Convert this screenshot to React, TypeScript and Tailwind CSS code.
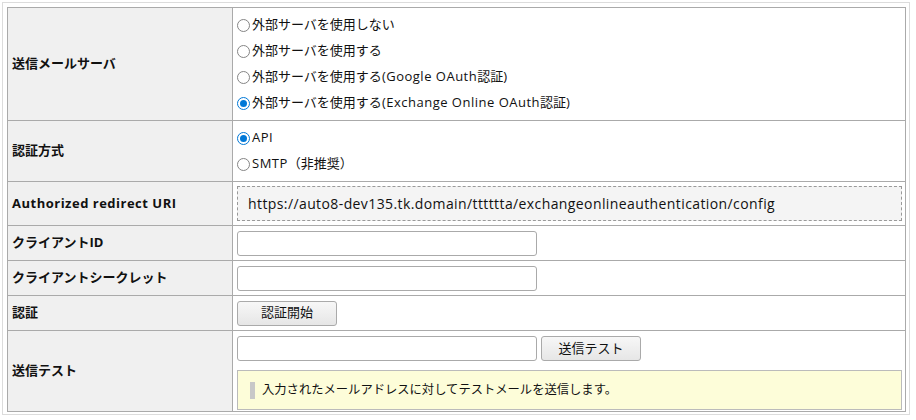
import type { ReactNode } from 'react'

const font = { fontFamily: '"Open Sans", "Noto Sans CJK JP", sans-serif' }

function Radio({ checked, children }: { checked?: boolean; children: ReactNode }) {
  return (
    <label className="flex h-[26px] items-center text-[13px] text-[#111]">
      {checked ? (
        <span className="flex h-[13px] w-[13px] items-center justify-center rounded-full border border-[#0078d7] bg-white">
          <span className="h-[7px] w-[7px] rounded-full bg-[#0078d7]" />
        </span>
      ) : (
        <span className="h-[13px] w-[13px] rounded-full border border-[#858585] bg-white" />
      )}
      <span className="ml-[2px]">{children}</span>
    </label>
  )
}

function Row({ label, h, last, top, children }: { label: ReactNode; h: string; last?: boolean; top?: boolean; children: ReactNode }) {
  return (
    <div className={`flex ${last ? '' : 'border-b border-[#aaa]'}`}>
      <div className={`flex w-[225px] shrink-0 items-center border-r border-[#aaa] bg-[#f0f0f0] pl-[4px] text-[13px] font-bold text-[#111] ${h}`}>
        {label}
      </div>
      <div className={`flex flex-1 flex-col pl-[4px] pr-[3px] ${top ? 'justify-start pt-[5px]' : 'justify-center'}`}>{children}</div>
    </div>
  )
}

function TextInput() {
  return <div className="h-[25px] w-[300px] rounded-[3px] border border-[#aaa] bg-white" />
}

function Button({ children }: { children: ReactNode }) {
  return (
    <button className="flex h-[25px] w-[100px] items-center justify-center rounded-[3px] border border-[#aaa] bg-gradient-to-b from-[#f7f7f7] to-[#e6e6e6] text-[13px] text-[#111]">
      {children}
    </button>
  )
}

const Latin = ({ children }: { children: ReactNode }) => <span className="tracking-[0.5px]">{children}</span>

export default function App() {
  return (
    <div className="bg-white p-[2px]" style={font}>
      <div className="w-[908px] border border-[#dcdcdc] pb-[2px] pl-[4px] pr-[3px] pt-[4px]">
        <div className="border border-[#aaa]">
          <Row label="送信メールサーバ" h="h-[112px]">
            <div className="flex flex-col">
              <Radio>外部サーバを使用しない</Radio>
              <Radio>外部サーバを使用する</Radio>
              <Radio>
                外部サーバを使用する<Latin>(Google OAuth</Latin>認証)
              </Radio>
              <Radio checked>
                外部サーバを使用する<Latin>(Exchange Online OAuth</Latin>認証)
              </Radio>
            </div>
          </Row>
          <Row label="認証方式" h="h-[60px]">
            <div className="flex flex-col">
              <Radio checked>
                <Latin>API</Latin>
              </Radio>
              <Radio>
                <Latin>SMTP</Latin>（非推奨）
              </Radio>
            </div>
          </Row>
          <Row label={<Latin>Authorized redirect URI</Latin>} h="h-[43px]">
            <div className="flex h-[35px] items-center border border-dashed border-[#999] bg-[#f4f4f4] pl-[10px] text-[14px] tracking-[0.4px] text-[#111]">
              https://auto8-dev135.tk.domain/tttttta/exchangeonlineauthentication/config
            </div>
          </Row>
          <Row label="クライアントID" h="h-[34px]">
            <TextInput />
          </Row>
          <Row label="クライアントシークレット" h="h-[34px]">
            <TextInput />
          </Row>
          <Row label="認証" h="h-[34px]">
            <Button>認証開始</Button>
          </Row>
          <Row label="送信テスト" h="h-[80px]" last top>
            <div className="flex gap-[4px]">
              <TextInput />
              <Button>送信テスト</Button>
            </div>
            <div className="mt-[9px] flex h-[40px] items-center border border-[#bbb] bg-[#fdfdd9] pl-[12px]">
              <span className="h-[17px] w-[5px] bg-[#c8c8c8]" />
              <span className="ml-[7px] text-[12.3px] text-[#111]">入力されたメールアドレスに対してテストメールを送信します。</span>
            </div>
          </Row>
        </div>
      </div>
    </div>
  )
}
